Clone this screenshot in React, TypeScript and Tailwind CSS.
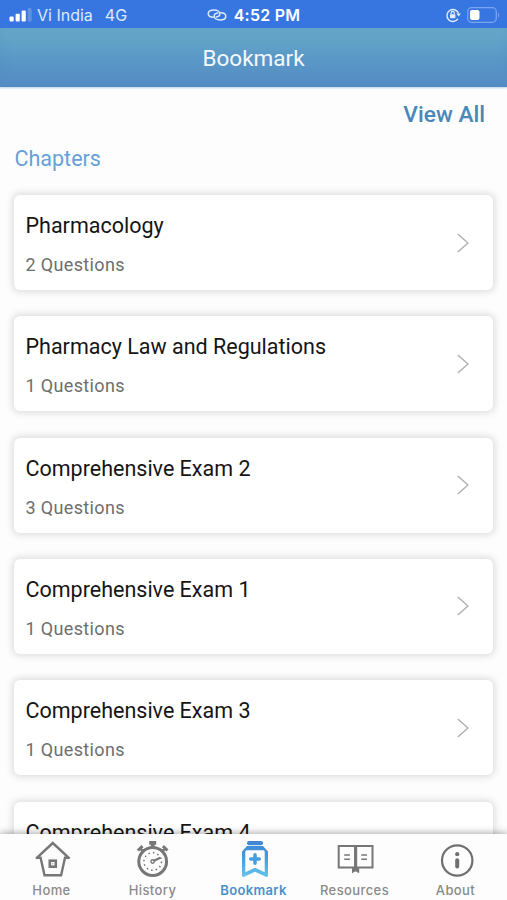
import React from "react";

const chapters = [
  { title: "Pharmacology", count: 2 },
  { title: "Pharmacy Law and Regulations", count: 1 },
  { title: "Comprehensive Exam 2", count: 3 },
  { title: "Comprehensive Exam 1", count: 1 },
  { title: "Comprehensive Exam 3", count: 1 },
  { title: "Comprehensive Exam 4", count: 1 },
];

function StatusBar() {
  return (
    <div className="grid h-7 shrink-0 grid-cols-[1fr_auto_1fr] items-center bg-[#3776e1] pt-[2px] font-['Inter',sans-serif] text-white">
      <div className="flex items-center pl-[9px] text-[16px] leading-none text-[#dce9fd]">
        <svg width="24" height="14" viewBox="0 0 24 14" fill="#fff">
          <rect x="0.5" y="8.5" width="4.2" height="5" rx="1" />
          <rect x="6.6" y="5.8" width="4.2" height="7.7" rx="1" />
          <rect x="12.6" y="2.5" width="4.2" height="11" rx="1" />
          <rect x="18.7" y="0" width="4" height="13.5" rx="1" opacity="0.2" />
        </svg>
        <span className="ml-[4px]">Vi India</span>
        <span className="ml-[12px]">4G</span>
      </div>
      <div className="flex items-center gap-[7px]">
        <svg width="20" height="14" viewBox="0 0 20 14" fill="none" stroke="#dce9fd" strokeWidth="1.5" strokeLinecap="round">
          <path d="M6.300 9.300C3.300 9.300 1.200 8 1.200 5.800 1.200 3.500 3.700 2 7 2s5.900 1.500 5.900 3.700c0 1.700-1.500 2.900-3.700 3.200" />
          <path d="M13.700 4.700c3 0 5.100 1.300 5.100 3.500 0 2.300-2.500 3.800-5.800 3.800s-5.900-1.500-5.900-3.700c0-1.700 1.500-2.900 3.700-3.200" />
        </svg>
        <span className="text-[16px] font-semibold leading-none tracking-[0.25px]">4:52 PM</span>
      </div>
      <div className="flex items-center justify-end pr-[7px]">
        <svg width="16" height="16" viewBox="0 0 16 16" fill="none" stroke="#e4eefd" strokeWidth="1.400">
          <path d="M12.900 11.900A6 6 0 1 1 13.500 6.200" />
          <path d="M11.400 6.400h4.400l-2.200 3.200z" fill="#e4eefd" stroke="none" />
          <rect x="5" y="7.200" width="5.400" height="4" rx=".7" fill="#e4eefd" stroke="none" />
          <path d="M6.100 7.400V6a1.600 1.600 0 0 1 3.200 0v1.400" strokeWidth="1.200" />
        </svg>
        <svg className="ml-[6px]" width="33" height="16" viewBox="0 0 33 16">
          <rect x="0.700" y="0.700" width="28.600" height="14.600" rx="4" fill="none" stroke="#79a5ef" strokeWidth="1.300" />
          <rect x="3" y="3" width="9.500" height="10" rx="2" fill="#fff" />
          <path d="M31 5.500c1.600.7 1.600 4.300 0 5z" fill="#79a5ef" />
        </svg>
      </div>
    </div>
  );
}

function ChapterCard({ title, count }: { title: string; count: number }) {
  return (
    <li className="flex h-[95px] shrink-0 items-start justify-between rounded-[6px] bg-white pl-[11.500px] pr-[24px] shadow-[0_0_7px_2px_rgba(0,0,0,0.13)]">
      <div className="pt-[18px]">
        <div className="text-[21.500px] leading-[26px] text-[#151515]">{title}</div>
        <div className="mt-[15px] text-[18px] leading-[22px] tracking-[0.35px] text-[#6e6e6e]">{count} Questions</div>
      </div>
      <svg className="mt-[37.500px]" width="13" height="20" viewBox="0 0 13 20" fill="none" stroke="#b0b0b0" strokeWidth="1.500">
        <path d="M1.800 1 L12 10 L1.800 19" />
      </svg>
    </li>
  );
}

function HomeIcon() {
  return (
    <svg width="38" height="38" viewBox="0 0 38 38" fill="none" stroke="#777" strokeWidth="2.400">
      <path d="M3 19.700 19.800 4 36.600 19.700" />
      <path d="M4.400 18.700h3.200L11.500 36.200h16.600l3.900-17.500h3.200" />
      <rect x="16.800" y="21.700" width="6" height="6" strokeWidth="2.600" />
      <circle cx="19.800" cy="24.700" r="0.700" fill="#aaa" stroke="none" />
    </svg>
  );
}

function HistoryIcon() {
  return (
    <svg width="38" height="38" viewBox="0 0 38 38" fill="none" stroke="#777">
      <circle cx="18.700" cy="22.500" r="13.900" strokeWidth="3" />
      <circle cx="18.700" cy="22.500" r="8.800" strokeWidth="1.500" strokeDasharray="1.600 3.007" />
      <path d="M15.200 3.800h7M18.700 3v6" strokeWidth="3.800" />
      <path d="m3.900 11.500 4.600-4.400M6 9l3.500 3.500M33.500 11.500 28.900 7.100M31.400 9l-3.500 3.500" strokeWidth="3" />
      <path d="m19.500 22 6.700-3.300" strokeWidth="2.200" />
      <circle cx="18.600" cy="22.500" r="1.700" strokeWidth="1.400" />
    </svg>
  );
}

function BookmarkIcon() {
  return (
    <svg width="38" height="38" viewBox="0 0 38 38">
      <defs>
        <linearGradient id="bookmark" x1="0" y1="2" x2="0" y2="38" gradientUnits="userSpaceOnUse">
          <stop stopColor="#4085d5" />
          <stop offset="0.500" stopColor="#469ddf" />
          <stop offset="1" stopColor="#66c5eb" />
        </linearGradient>
      </defs>
      <rect x="12" y="2" width="16" height="4.200" rx="2" fill="url(#bookmark)" />
      <path d="M12 7h16l5 5.500V36.500a1.500 1.500 0 0 1-2.200 1.300L20 32.700 9.200 37.800A1.500 1.500 0 0 1 7 36.500V12.500zM11.800 11.200a1.500 1.500 0 0 0-1.500 1.500v20.600L20 28.700l9.700 4.600V12.700a1.500 1.500 0 0 0-1.500-1.500z" fillRule="evenodd" fill="url(#bookmark)" />
      <path d="M20 15.700v8.600M15.700 20h8.600" stroke="#469ddf" strokeWidth="3.500" strokeLinecap="round" />
    </svg>
  );
}

function ResourcesIcon() {
  return (
    <svg width="38" height="38" viewBox="0 0 38 38" fill="none" stroke="#777">
      <path d="M2.700 7.100h33.800v21.400H2.700z" strokeWidth="2" />
      <path d="M19.600 6.500v22" strokeWidth="3.200" />
      <path d="M16 28h7.200v6.200l-3.600-2-3.600 2z" fill="#777" stroke="none" />
      <path d="M8.200 16h5.700M8.200 20.200h5.700M25.300 16H31M25.300 20.200H31" strokeWidth="1.600" />
    </svg>
  );
}

function AboutIcon() {
  return (
    <svg width="38" height="38" viewBox="0 0 38 38" fill="none" stroke="#6f6f6f">
      <circle cx="20.200" cy="21.500" r="15.200" strokeWidth="2.200" />
      <circle cx="20.200" cy="15.200" r="2.100" fill="#6f6f6f" stroke="none" />
      <path d="M20.200 21.200v6.300" strokeWidth="4" strokeLinecap="round" />
    </svg>
  );
}

const tabs = [
  { label: "Home", Icon: HomeIcon, active: false },
  { label: "History", Icon: HistoryIcon, active: false },
  { label: "Bookmark", Icon: BookmarkIcon, active: true },
  { label: "Resources", Icon: ResourcesIcon, active: false },
  { label: "About", Icon: AboutIcon, active: false },
];

export default function App() {
  return (
    <div className="flex h-[900px] w-[507px] flex-col overflow-hidden bg-[#fdfdfd] font-['Roboto',sans-serif]">
      <StatusBar />
      <header className="flex h-[59px] shrink-0 items-center justify-center bg-linear-to-b from-[#67a9c8] via-[#5a99c7] to-[#548bc4] pt-[2px] text-[22.500px] leading-none text-[#f4f9fd] shadow-[inset_0_0_8px_rgba(84,139,196,0.35),0_1px_2px_rgba(84,139,196,0.4)]">
        Bookmark
      </header>
      <main className="flex min-h-0 flex-1 flex-col overflow-hidden px-[14px]">
        <div className="mt-[14px] pr-[8px] text-right text-[22.700px] font-medium leading-[27px] text-[#4a88b8]">View All</div>
        <h2 className="mt-[18px] pl-[0.500px] text-[21.500px] leading-[26px] text-[#66a0da]">Chapters</h2>
        <ul className="mt-[23px] flex flex-col gap-[26.33px]">
          {chapters.map((c) => (
            <ChapterCard key={c.title} title={c.title} count={c.count} />
          ))}
        </ul>
      </main>
      <nav className="relative grid h-[66px] shrink-0 grid-cols-5 bg-[#fdfdfd] px-[1px] pt-[5px] shadow-[0_-1px_7px_rgba(0,0,0,0.35)]">
        {tabs.map(({ label, Icon, active }) => (
          <div key={label} className="flex flex-col items-center">
            <Icon />
            <span className={`mt-[5px] font-['Inter',sans-serif] text-[13px] leading-[16px] ${active ? "font-semibold tracking-[0.350px] text-[#4a8fca]" : "font-medium tracking-[0.400px] text-[#8a8a8a]"}`}>
              {label}
            </span>
          </div>
        ))}
      </nav>
    </div>
  );
}
